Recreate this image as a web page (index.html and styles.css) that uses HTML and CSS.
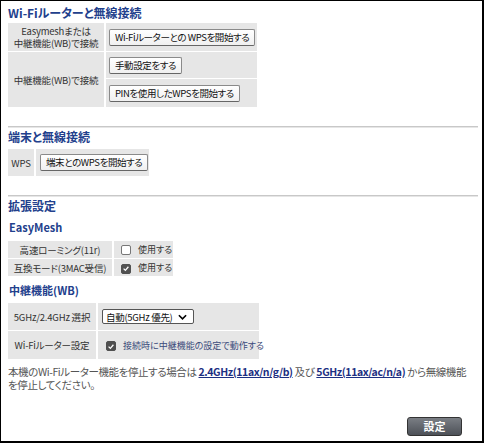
FILE: index.html
```html
<!DOCTYPE html>
<html lang="ja">
<head>
<meta charset="utf-8">
<link rel="stylesheet" href="styles.css">
</head>
<body>
<div class="frame">
  <h2 class="title t1">Wi-Fiルーターと無線接続</h2>
  <table class="grid g1">
    <tr>
      <td class="lab c1">Easymeshまたは<br>中継機能(WB)で接続</td>
      <td class="val"><span class="btn">Wi-Fiルーターとの WPSを開始する</span></td>
    </tr>
    <tr>
      <td class="lab c1" rowspan="2">中継機能(WB)で接続</td>
      <td class="val"><span class="btn">手動設定をする</span></td>
    </tr>
    <tr>
      <td class="val"><span class="btn">PINを使用したWPSを開始する</span></td>
    </tr>
  </table>
  <div class="rule r1"></div>
  <h2 class="title t2">端末と無線接続</h2>
  <table class="grid g2">
    <tr>
      <td class="lab c2">WPS</td>
      <td class="val"><span class="btn">端末とのWPSを開始する</span></td>
    </tr>
  </table>
  <div class="rule r2"></div>
  <h2 class="title t3">拡張設定</h2>
  <h3 class="sub s1">EasyMesh</h3>
  <table class="grid g3">
    <tr>
      <td class="lab c3">高速ローミング(11r)</td>
      <td class="val small"><span class="cb"></span>使用する</td>
    </tr>
    <tr>
      <td class="lab c3">互換モード(3MAC受信)</td>
      <td class="val small"><span class="cb on"><svg viewBox="0 0 10 10" width="9" height="9"><path d="M2 5.2 L4.2 7.3 L8 2.8" fill="none" stroke="#fff" stroke-width="1.6"/></svg></span>使用する</td>
    </tr>
  </table>
  <h3 class="sub s2">中継機能(WB)</h3>
  <table class="grid g4">
    <tr>
      <td class="lab c4 left">5GHz/2.4GHz 選択</td>
      <td class="val"><span class="sel">自動(5GHz 優先)<svg class="chev" viewBox="0 0 10 6" width="9" height="6"><path d="M1 1 L5 5 L9 1" fill="none" stroke="#000" stroke-width="1.8"/></svg></span></td>
    </tr>
    <tr>
      <td class="lab c4">Wi-Fiルーター設定</td>
      <td class="val small blue"><span class="cb on"><svg viewBox="0 0 10 10" width="9" height="9"><path d="M2 5.2 L4.2 7.3 L8 2.8" fill="none" stroke="#fff" stroke-width="1.6"/></svg></span>接続時に中継機能の設定で動作する</td>
    </tr>
  </table>
  <p class="note">本機のWi-Fiルーター機能を停止する場合は <a href="#">2.4GHz(11ax/n/g/b)</a> 及び <a href="#">5GHz(11ax/ac/n/a)</a> から無線機能<br>を停止してください。</p>
  <div class="actions"><span class="submit">設定</span></div>
</div>
</body>
</html>
```

FILE: styles.css
```css
* { box-sizing: border-box; }
html, body { margin: 0; padding: 0; background: #fff; }
body {
  font-family: "Noto Sans CJK JP", "Liberation Sans", sans-serif;
  font-feature-settings: "palt";
  font-size: 9.5px;
  color: #333;
}
.frame {
  width: 484px;
  height: 443px;
  border-style: solid;
  border-color: #000;
  border-width: 1px 2px 2px 1px;
  padding: 0 5px 0 7px;
  display: flex;
  flex-direction: column;
}
.title {
  margin: 0;
  font-size: 12px;
  font-weight: bold;
  color: #22408c;
  line-height: 14px;
}
.t1 { margin-top: 5px; }
.t2 { margin-top: 2px; }
.t3 { margin-top: 2px; }
.sub {
  margin: 0;
  font-size: 11px;
  font-weight: bold;
  color: #22408c;
  line-height: 14px;
  padding-left: 1px;
}
.s1 { margin-top: 7px; }
.s2 { margin-top: 7px; }
.grid {
  border-collapse: separate;
  border-spacing: 2px 1px;
  margin: -1px -2px;
  table-layout: fixed;
}
.g1 { margin-top: 2px; width: 253px; }
.g2 { margin-top: 4px; width: 145px; }
.g3 { margin-top: 6px; width: 169px; }
.g4 { margin-top: 5px; width: 255px; }
.grid td {
  background: #e6e6e6;
  padding: 0;
  vertical-align: middle;
  white-space: nowrap;
}
.lab { text-align: center; color: #333; line-height: 12px; letter-spacing: -0.2px; }
.c1 { width: 96px; }
.c2 { width: 26px; }
.c3 { width: 104px; height: 17px; }
.c4 { width: 88px; }
.g4 tr:first-child td { height: 27px; }
.g4 tr:nth-child(2) td { height: 28px; }
.g1 tr:first-child td { height: 28px; }
.g1 tr:nth-child(2) td.val { height: 26px; }
.g1 tr:nth-child(3) td.val { height: 28px; }
.g2 td { height: 27px; }
.val { padding-left: 3px !important; }
.btn {
  display: inline-block;
  height: 17px;
  line-height: 15px;
  padding: 0 5px;
  border: 1px solid #8a8a8a;
  border-bottom-color: #666;
  border-radius: 2px;
  background: linear-gradient(#ffffff, #f0f0f0);
  color: #111;
  font-size: 9.5px;
  letter-spacing: -0.4px;
  white-space: nowrap;
}
.g2 .btn { margin-left: 1px; }
.small { font-size: 9px; color: #333; }
.small.blue { color: #3a4a7a; }
.cb {
  display: inline-flex;
  align-items: center;
  justify-content: center;
  width: 10px;
  height: 10px;
  border: 1px solid #777;
  border-radius: 2px;
  background: #fff;
  vertical-align: -2px;
  margin: 0 7px 0 4px;
}
.cb.on { background: #505050; border-color: #505050; }
.g4 .cb { margin-left: 5px; }
.sel {
  display: inline-flex;
  align-items: center;
  justify-content: space-between;
  width: 92px;
  height: 15px;
  border: 1px solid #555;
  border-radius: 2px;
  background: #fff;
  color: #111;
  padding: 0 6px 0 3px;
  font-size: 9.5px;
  letter-spacing: -0.3px;
  margin-left: 1px;
}
.chev { flex: none; }
.rule {
  height: 2px;
  background: #c8c8c8;
  border-bottom: 1px solid #e6e6e6;
  width: 470px;
  flex: none;
}
.r1 { margin-top: 19px; }
.r2 { margin-top: 19px; }
.note {
  margin: 6px 0 0 0;
  font-size: 10.5px;
  line-height: 13px;
  color: #555;
  width: 472px;
  letter-spacing: -0.4px;
}
.note a {
  color: #1c2f82;
  font-weight: bold;
  text-decoration: underline;
}
.actions {
  margin-top: auto;
  margin-bottom: 5px;
  display: flex;
  justify-content: flex-end;
  padding-right: 15px;
}
.submit {
  display: inline-block;
  width: 55px;
  height: 19px;
  line-height: 17px;
  text-align: center;
  border: 1px solid #333;
  border-radius: 3px;
  background: linear-gradient(#7a7e84, #4d5158);
  color: #fff;
  font-weight: bold;
  font-size: 11px;
}
```
